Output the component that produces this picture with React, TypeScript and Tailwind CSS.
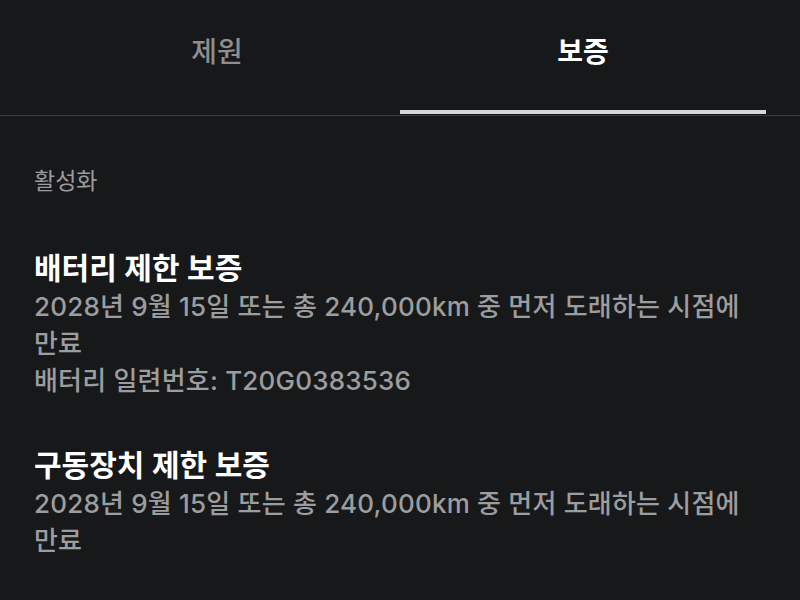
import React from "react";

const font = { fontFamily: 'Inter, "Noto Sans CJK KR", "Noto Sans", sans-serif' };

export default function App() {
  return (
    <div className="w-[800px] h-[600px] bg-[#17181a] overflow-hidden" style={font}>
      <div className="flex px-[34px] border-b border-[#3a3b3d] h-[116px]">
        <div className="flex-1 flex justify-center pt-[32px] text-[28px] leading-[40px] font-medium text-[#8d8e90]">제원</div>
        <div className="flex-1 flex flex-col items-center">
          <div className="pt-[32px] text-[28px] leading-[40px] font-bold text-white flex-1">보증</div>
          <div className="w-full h-[5px] bg-[#d6d6d6] border-b border-[#111]"></div>
        </div>
      </div>
      <div className="px-[34px]">
        <div className="pt-[50px] text-[23px] text-[#9a9b9d] leading-[30px]">활성화</div>
        <div className="pt-[52px] text-[30px] font-semibold text-white leading-[40px]">배터리 제한 보증</div>
        <div className="text-[26px] tracking-[0.2px] font-medium text-[#9c9d9f] leading-[37px]">
          <div>2028년 9월 15일 또는 총 240,000km 중 먼저 도래하는 시점에<br />만료</div>
          <div>배터리 일련번호: T20G0383536</div>
        </div>
        <div className="pt-[46px] text-[30px] font-semibold text-white leading-[40px]">구동장치 제한 보증</div>
        <div className="text-[26px] tracking-[0.2px] font-medium text-[#9c9d9f] leading-[37px]">
          <div>2028년 9월 15일 또는 총 240,000km 중 먼저 도래하는 시점에<br />만료</div>
        </div>
      </div>
    </div>
  );
}
